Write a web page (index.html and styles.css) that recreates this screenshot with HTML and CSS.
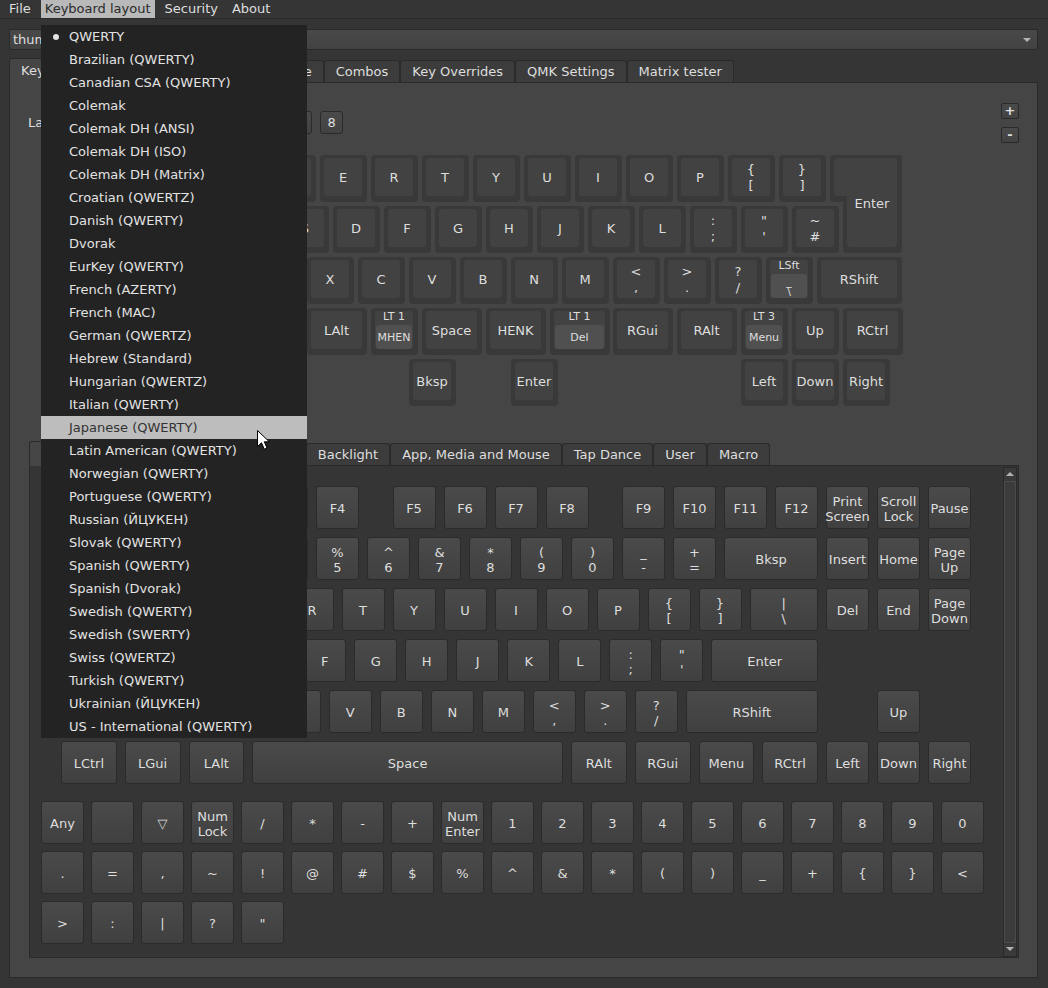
FILE: index.html
```html
<!DOCTYPE html>
<html lang="en">
<head>
    <meta charset="UTF-8">
    <title>Vial</title>
    <link rel="stylesheet" href="styles.css">
</head>
<body>
    <div class="menubar">
        <span>File</span><span class="open">Keyboard layout</span><span>Security</span><span>About</span>
    </div>

    <div class="main">
        <div class="combo">thumbkey (vial)</div>

        <div class="tabbar">
            <div class="tab active">Keymap</div>
            <div class="tab">Macros</div>
            <div class="tab">Lighting</div>
            <div class="tab">Tap Dance</div>
            <div class="tab">Combos</div>
            <div class="tab">Key Overrides</div>
            <div class="tab">QMK Settings</div>
            <div class="tab">Matrix tester</div>
        </div>

        <div class="pane">
            <div class="toolbar">
                <div class="layers">
                    <span>Layer</span>
                    <div class="lbtn on">0</div>
                    <div class="lbtn">1</div>
                    <div class="lbtn">2</div>
                    <div class="lbtn">3</div>
                    <div class="lbtn">4</div>
                    <div class="lbtn">5</div>
                    <div class="lbtn">6</div>
                    <div class="lbtn">7</div>
                    <div class="lbtn">8</div>
                </div>
                <div class="zoom">
                    <div class="zbtn">+</div>
                    <div class="zbtn">-</div>
                </div>
            </div>

            <div class="board" id="board">
                <div class="iso">
                    <div class="iso-top"></div>
                    <div class="iso-stem"></div>
                    <div class="iso-ftop"></div>
                    <div class="iso-fstem">Enter</div>
                </div>
            </div>

            <div class="tabbar sub">
                <div class="tab active">Basic</div>
                <div class="tab">ISO/JIS</div>
                <div class="tab">Layers</div>
                <div class="tab">Quantum</div>
                <div class="tab">Backlight</div>
                <div class="tab">App, Media and Mouse</div>
                <div class="tab">Tap Dance</div>
                <div class="tab">User</div>
                <div class="tab">Macro</div>
            </div>

            <div class="lower">
                <div class="lower-content">
                    <div class="kb" id="kb"></div>
                    <div class="grid" id="grid"></div>
                </div>
                <div class="scrollbar">
                    <div class="arrow up"></div>
                    <div class="track"></div>
                    <div class="arrow down"></div>
                </div>
            </div>
        </div>
    </div>

    <div class="dropdown">
        <div class="checked">QWERTY</div>
        <div>Brazilian (QWERTY)</div>
        <div>Canadian CSA (QWERTY)</div>
        <div>Colemak</div>
        <div>Colemak DH (ANSI)</div>
        <div>Colemak DH (ISO)</div>
        <div>Colemak DH (Matrix)</div>
        <div>Croatian (QWERTZ)</div>
        <div>Danish (QWERTY)</div>
        <div>Dvorak</div>
        <div>EurKey (QWERTY)</div>
        <div>French (AZERTY)</div>
        <div>French (MAC)</div>
        <div>German (QWERTZ)</div>
        <div>Hebrew (Standard)</div>
        <div>Hungarian (QWERTZ)</div>
        <div>Italian (QWERTY)</div>
        <div class="hover">Japanese (QWERTY)</div>
        <div>Latin American (QWERTY)</div>
        <div>Norwegian (QWERTY)</div>
        <div>Portuguese (QWERTY)</div>
        <div>Russian (ЙЦУКЕН)</div>
        <div>Slovak (QWERTY)</div>
        <div>Spanish (QWERTY)</div>
        <div>Spanish (Dvorak)</div>
        <div>Swedish (QWERTY)</div>
        <div>Swedish (SWERTY)</div>
        <div>Swiss (QWERTZ)</div>
        <div>Turkish (QWERTY)</div>
        <div>Ukrainian (ЙЦУКЕН)</div>
        <div>US - International (QWERTY)</div>
    </div>

    <svg class="cursor" width="14" height="21" viewBox="0 0 14 21">
        <path d="M0.5 0.5 L0.5 16.5 L4.5 12.8 L7.3 19.2 L10 18 L7.3 11.8 L12.3 11.8 Z" fill="#fff" stroke="#000" stroke-width="1"/>
    </svg>

    <script>
        const U = 51;

        // keyboard shown in the editor: [row, col, label, width, mask legend]
        const upper = [
            [0, 2.5, 'W'], [0, 3.5, 'E'], [0, 4.5, 'R'], [0, 5.5, 'T'], [0, 6.5, 'Y'], [0, 7.5, 'U'],
            [0, 8.5, 'I'], [0, 9.5, 'O'], [0, 10.5, 'P'], [0, 11.5, '{\n['], [0, 12.5, '}\n]'],
            [1, 2.75, 'S'], [1, 3.75, 'D'], [1, 4.75, 'F'], [1, 5.75, 'G'], [1, 6.75, 'H'], [1, 7.75, 'J'],
            [1, 8.75, 'K'], [1, 9.75, 'L'], [1, 10.75, ':\n;'], [1, 11.75, '"\n\''], [1, 12.75, '~\n#'],
            [2, 3.25, 'X'], [2, 4.25, 'C'], [2, 5.25, 'V'], [2, 6.25, 'B'], [2, 7.25, 'N'], [2, 8.25, 'M'],
            [2, 9.25, '<\n,'], [2, 10.25, '>\n.'], [2, 11.25, '?\n/'], [2, 12.25, '_\n\\', 1, 'LSft'], [2, 13.25, 'RShift', 1.75],
            [3, 3.25, 'LAlt', 1.25], [3, 4.5, 'MHEN', 1, 'LT 1'], [3, 5.5, 'Space', 1.25], [3, 6.75, 'HENK', 1.25],
            [3, 8, 'Del', 1.25, 'LT 1'], [3, 9.25, 'RGui', 1.25], [3, 10.5, 'RAlt', 1.25], [3, 11.75, 'Menu', 1, 'LT 3'],
            [3, 12.75, 'Up'], [3, 13.75, 'RCtrl', 1.25],
            [4, 5.25, 'Bksp'], [4, 7.25, 'Enter'], [4, 11.75, 'Left'], [4, 12.75, 'Down'], [4, 13.75, 'Right']
        ];

        const board = document.getElementById('board');
        upper.forEach(function (k) {
            const [row, col, text, w = 1, legend] = k;
            const key = document.createElement('div');
            key.className = legend ? 'key mask' : 'key';
            key.style.left = Math.round(112.5 + col * U) + 'px';
            key.style.top = (11 + row * U) + 'px';
            key.style.width = Math.round(w * U - 4) + 'px';
            const face = document.createElement('div');
            face.className = 'face';
            if (legend) {
                const top = document.createElement('span');
                top.className = 'legend';
                top.textContent = legend;
                const inner = document.createElement('span');
                inner.className = 'inner';
                inner.textContent = text;
                face.append(top, inner);
            } else {
                face.textContent = text;
            }
            key.appendChild(face);
            board.appendChild(key);
        });

        // keycode picker, null is an empty slot
        const rows = [
            [['Esc'], [null, 1], ['F1'], ['F2'], ['F3'], ['F4'], [null, 0.5], ['F5'], ['F6'], ['F7'], ['F8'], [null, 0.5],
             ['F9'], ['F10'], ['F11'], ['F12'], ['Print\nScreen'], ['Scroll\nLock'], ['Pause']],
            [['~\n`'], ['!\n1'], ['@\n2'], ['#\n3'], ['$\n4'], ['%\n5'], ['^\n6'], ['&\n7'], ['*\n8'], ['(\n9'], [')\n0'],
             ['_\n-'], ['+\n='], ['Bksp', 2], ['Insert'], ['Home'], ['Page\nUp']],
            [['Tab', 1.5], ['Q'], ['W'], ['E'], ['R'], ['T'], ['Y'], ['U'], ['I'], ['O'], ['P'], ['{\n['], ['}\n]'],
             ['|\n\\', 1.5], ['Del'], ['End'], ['Page\nDown']],
            [['Caps\nLock', 1.75], ['A'], ['S'], ['D'], ['F'], ['G'], ['H'], ['J'], ['K'], ['L'], [':\n;'], ['"\n\''], ['Enter', 2.25]],
            [['LShift', 2.25], ['Z'], ['X'], ['C'], ['V'], ['B'], ['N'], ['M'], ['<\n,'], ['>\n.'], ['?\n/'],
             ['RShift', 2.75], [null, 1], ['Up']],
            [['LCtrl', 1.25], ['LGui', 1.25], ['LAlt', 1.25], ['Space', 6.25], ['RAlt', 1.25], ['RGui', 1.25],
             ['Menu', 1.25], ['RCtrl', 1.25], ['Left'], ['Down'], ['Right']]
        ];

        const kb = document.getElementById('kb');
        rows.forEach(function (row) {
            const line = document.createElement('div');
            line.className = 'kb-row';
            row.forEach(function ([text, w = 1]) {
                const el = document.createElement('div');
                el.className = text === null ? 'gap' : 'btn';
                el.style.width = (w * U - 8) + 'px';
                if (text) el.textContent = text;
                line.appendChild(el);
            });
            kb.appendChild(line);
        });

        const extra = ['Any', '', '▽', 'Num\nLock', '/', '*', '-', '+', 'Num\nEnter', '1', '2', '3', '4', '5', '6', '7', '8', '9', '0',
            '.', '=', ',', '~', '!', '@', '#', '$', '%', '^', '&', '*', '(', ')', '_', '+', '{', '}', '<',
            '>', ':', '|', '?', '"'];

        const grid = document.getElementById('grid');
        extra.forEach(function (text) {
            const el = document.createElement('div');
            el.className = 'btn';
            el.textContent = text;
            grid.appendChild(el);
        });
    </script>
</body>
</html>
```

FILE: styles.css
```css
* {
    box-sizing: border-box;
}

body {
    margin: 0;
    width: 1048px;
    height: 988px;
    overflow: hidden;
    position: relative;
    background: #353535;
    color: #dedede;
    font-family: "DejaVu Sans", "Liberation Sans", sans-serif;
    font-size: 13px;
}

/* menu bar */
.menubar {
    display: flex;
    height: 19px;
    padding-left: 5px;
    border-bottom: 1px solid #2b2b2b;
    line-height: 18px;
}

.menubar span {
    padding: 0 4px;
    margin-right: 6px;
}

.menubar .open {
    background: #b9b9b9;
    color: #2b2b2b;
}

.main {
    padding: 0 10px 0 9px;
}

.combo {
    position: relative;
    margin-top: 10px;
    height: 21px;
    padding-left: 3px;
    line-height: 19px;
    border: 1px solid #2a2a2a;
    border-radius: 2px;
    background: linear-gradient(#494949, #424242);
}

.combo::after {
    content: "";
    position: absolute;
    right: 6px;
    top: 8px;
    border: 4px solid transparent;
    border-top-color: #b4b4b4;
    border-bottom: 0;
}

/* tabs */
.tabbar {
    display: flex;
    align-items: flex-end;
    height: 24px;
    margin-top: 8px;
    flex: none;
}

.tabbar.sub {
    margin-top: 0;
}

.tab {
    height: 22px;
    padding: 0 11px;
    line-height: 22px;
    white-space: nowrap;
    border: 1px solid #2a2a2a;
    border-bottom: 0;
    border-radius: 3px 3px 0 0;
    background: #3c3c3c;
}

.tab.active {
    position: relative;
    height: 25px;
    margin-bottom: -1px;
    line-height: 24px;
    background: #454545;
}

.pane {
    display: flex;
    flex-direction: column;
    height: 896px;
    padding: 20px 18px 0 19px;
    border: 1px solid #2a2a2a;
    background: #454545;
}

.toolbar {
    display: flex;
    justify-content: space-between;
    height: 41px;
    flex: none;
}

.layers {
    display: flex;
    align-items: center;
    gap: 8px;
    height: 23px;
    margin: 8px 0 0 -1px;
}

.lbtn {
    width: 23px;
    height: 23px;
    text-align: center;
    line-height: 22px;
    border: 1px solid #2a2a2a;
    border-radius: 3px;
    background: linear-gradient(#4a4a4a, #424242);
}

.lbtn.on {
    background: #5c5c5c;
}

.zoom {
    display: flex;
    flex-direction: column;
    gap: 8px;
}

.zbtn {
    width: 18px;
    height: 16px;
    text-align: center;
    line-height: 14px;
    font-weight: bold;
    border: 1px solid #2a2a2a;
    border-radius: 2px;
    background: linear-gradient(#4a4a4a, #424242);
}

/* keymap editor */
.board {
    position: relative;
    height: 297px;
    flex: none;
}

.key {
    position: absolute;
    height: 47px;
    border-radius: 4px;
    background: #393939;
}

.face {
    position: absolute;
    top: 3px;
    left: 4px;
    right: 5px;
    bottom: 6px;
    display: flex;
    align-items: center;
    justify-content: center;
    padding-top: 2px;
    text-align: center;
    white-space: pre-line;
    line-height: 16px;
    border-radius: 3px;
    background: #424242;
}

.mask .face {
    flex-direction: column;
    justify-content: flex-start;
    padding: 0 1px;
    font-size: 11px;
    line-height: 12px;
}

.mask .inner {
    flex: 1;
    align-self: stretch;
    display: flex;
    align-items: center;
    justify-content: center;
    margin-top: 2px;
    padding-top: 1px;
    line-height: 10px;
    white-space: pre-line;
    border-radius: 3px;
    background: #505050;
}

.iso {
    position: absolute;
    left: 801px;
    top: 11px;
    width: 72px;
    height: 98px;
}

.iso div {
    position: absolute;
    border-radius: 4px;
}

.iso-top {
    left: 0;
    top: 0;
    width: 72px;
    height: 47px;
    background: #393939;
}

.iso-stem {
    left: 13px;
    top: 0;
    width: 59px;
    height: 98px;
    background: #393939;
}

.iso-ftop {
    left: 4px;
    top: 3px;
    width: 63px;
    height: 38px;
    background: #424242;
}

.iso-fstem {
    left: 17px;
    top: 3px;
    width: 50px;
    height: 89px;
    display: flex;
    align-items: center;
    justify-content: center;
    padding-top: 2px;
    background: #424242;
}

/* keycode picker */
.lower {
    display: flex;
    height: 493px;
    flex: none;
    border: 1px solid #2a2a2a;
    background: #353535;
}

.lower-content {
    flex: 1;
    padding-top: 20px;
}

.kb {
    display: flex;
    flex-direction: column;
    gap: 8px;
    margin-left: 31px;
}

.kb-row {
    display: flex;
    gap: 8px;
}

.btn {
    flex: none;
    display: flex;
    align-items: center;
    justify-content: center;
    width: 43px;
    height: 43px;
    padding-top: 2px;
    text-align: center;
    white-space: pre-line;
    line-height: 15px;
    border: 1px solid #2b2b2b;
    border-radius: 3px;
    background: linear-gradient(#4a4a4a, #404040);
}

.gap {
    flex: none;
    height: 43px;
}

.grid {
    display: grid;
    grid-template-columns: repeat(19, 43px);
    gap: 7px;
    margin: 17px 0 0 11px;
}

.scrollbar {
    display: flex;
    flex-direction: column;
    width: 14px;
    margin: 1px 1px 0 0;
    border: 1px solid #2a2a2a;
    background: #3a3a3a;
}

.arrow {
    position: relative;
    height: 13px;
    flex: none;
}

.arrow::after {
    content: "";
    position: absolute;
    left: 2px;
    top: 4px;
    border: 4px solid transparent;
}

.arrow.up::after {
    border-bottom-color: #b4b4b4;
    border-top: 0;
}

.arrow.down::after {
    border-top-color: #b4b4b4;
    border-bottom: 0;
}

.track {
    flex: 1;
    border: 1px solid #4b4b4b;
    background: #3c3c3c;
}

/* open popup menu */
.dropdown {
    position: absolute;
    left: 41px;
    top: 25px;
    width: 266px;
    background: #232323;
}

.dropdown div {
    position: relative;
    height: 23px;
    padding-left: 28px;
    line-height: 23px;
    white-space: nowrap;
    color: #e2e2e2;
}

.dropdown .checked::before {
    content: "";
    position: absolute;
    left: 12px;
    top: 9px;
    width: 6px;
    height: 6px;
    border-radius: 50%;
    background: #e2e2e2;
}

.dropdown .hover {
    background: #bdbdbd;
    color: #333;
}

.cursor {
    position: absolute;
    left: 257px;
    top: 430px;
}
```
